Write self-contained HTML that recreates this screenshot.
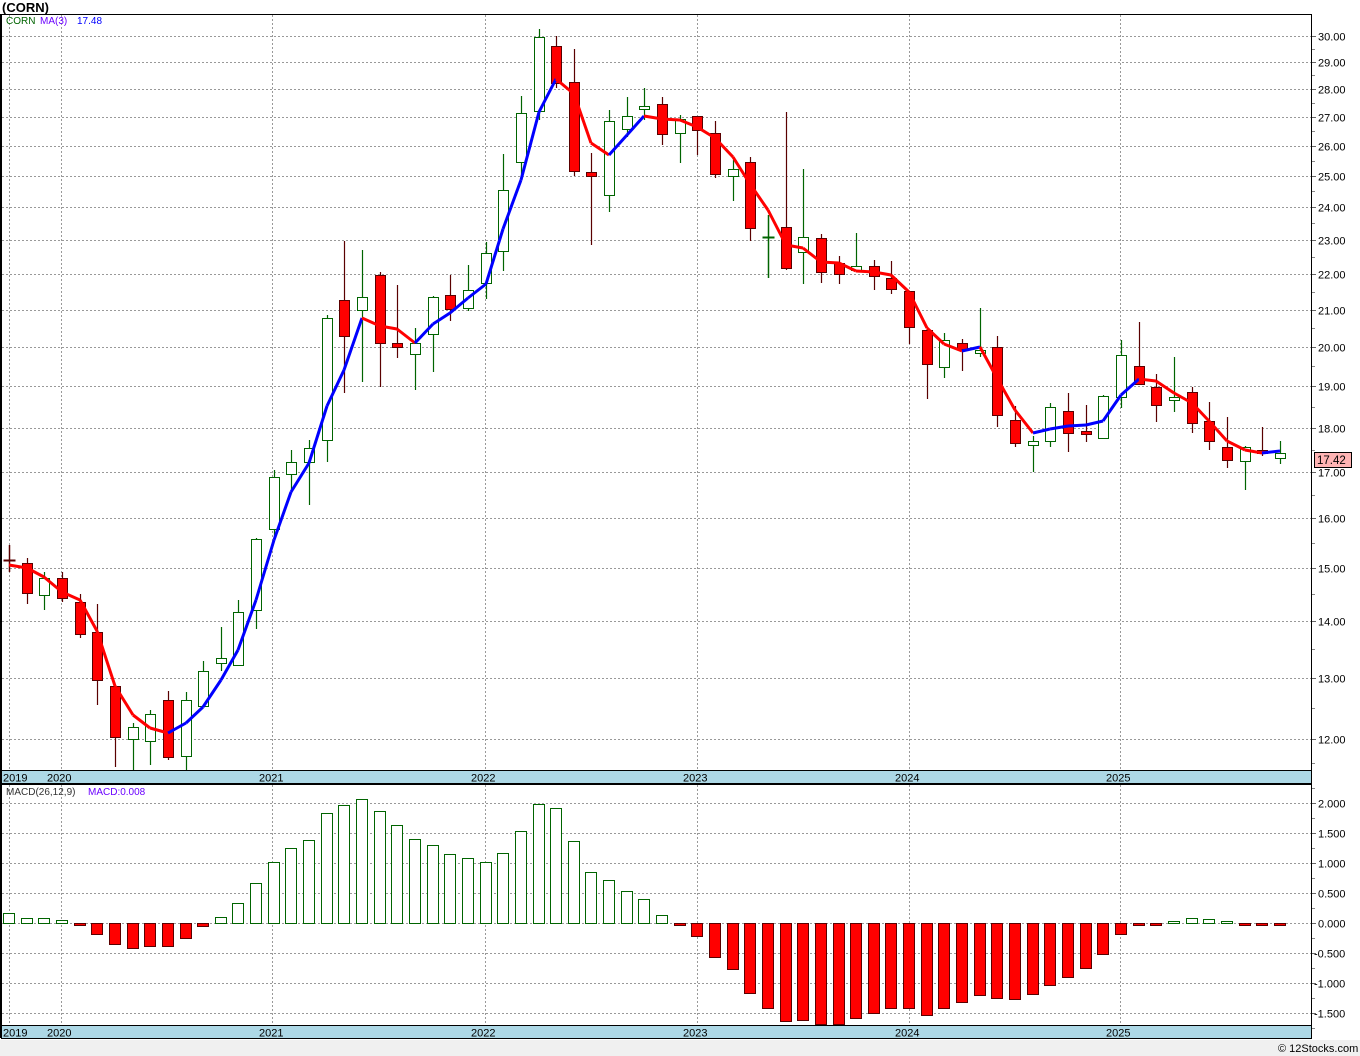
<!DOCTYPE html>
<html><head><meta charset="utf-8"><style>
body{margin:0;background:#fff;width:1360px;height:1056px;overflow:hidden;font-family:"Liberation Sans",sans-serif}
svg{position:absolute;left:0;top:0}
</style></head><body>
<svg id="s" width="1360" height="1056" xmlns="http://www.w3.org/2000/svg" font-family="Liberation Sans, sans-serif">
<rect x="0" y="1040" width="1360" height="16" fill="#f0f0f0"/>
<text x="2" y="12" font-size="13" font-weight="bold">(CORN)</text>
<rect x="1.5" y="770.5" width="1310" height="13" fill="#add8e6" stroke="#000"/>
<rect x="1.5" y="1025.5" width="1310" height="13" fill="#add8e6" stroke="#000"/>
<g id="g"></g>
<rect x="1.5" y="14.5" width="1310" height="756" fill="none" stroke="#000"/>
<line x1="1" y1="14" x2="1" y2="1038" stroke="#000" stroke-width="2"/>
<rect x="1.5" y="784.5" width="1310" height="241" fill="none" stroke="#000"/>
<text x="6" y="24" font-size="10" fill="#006400">CORN</text>
<text x="40" y="24" font-size="10" fill="#6a00ff">MA(3)</text>
<text x="77" y="24" font-size="10" fill="#0000ff">17.48</text>
<text x="6" y="795" font-size="10" fill="#333">MACD(26,12,9)</text>
<text x="88" y="795" font-size="10" fill="#6a00ff">MACD:0.008</text>
<rect x="1314.5" y="452.5" width="37" height="15" fill="#ffb4b4" stroke="#000"/>
<text x="1317" y="464" font-size="11.5">17.42</text>
<text x="1278" y="1052" font-size="11">© 12Stocks.com</text>
</svg>
<script>
var g=document.getElementById('g'),h='';
function L(x1,y1,x2,y2,c,w,d){h+='<line x1="'+x1+'" y1="'+y1+'" x2="'+x2+'" y2="'+y2+'" stroke="'+c+'" stroke-width="'+(w||1)+'"'+(d?' stroke-dasharray="2,2"':'')+'/>';}
function T(x,y,t,s){h+='<text x="'+x+'" y="'+y+'" font-size="'+(s||11)+'">'+t+'</text>';}
function py(p){return 36+(Math.log(30)-Math.log(p))*767.2;}
for(var p=12;p<=30;p++){var y=Math.round(py(p))+0.5;L(2,y,1311,y,'#999',1,1);L(1311,y,1316,y,'#666');T(1318,y+4,p.toFixed(2));
 var y2=Math.round(py(p+0.5))+0.5;if(p<30)L(1311,y2,1315,y2,'#888');}
L(1311,763.5,1315,763.5,'#888');
var ml=['2.000','1.500','1.000','0.500','0.000','-0.500','-1.000','-1.500'];
for(var i=0;i<8;i++){var y=803+i*30+0.5;L(2,y,1311,y,'#999',1,1);L(1311,y,1316,y,'#666');T(i>4?1314:1318,y+4,ml[i]);L(1311,y+15,1315,y+15,'#888');}
L(1311,788.5,1315,788.5,'#888');
var vx=[9,61,272,485,697,909,1120];
vx.forEach(function(x){x+=0.5;L(x,15,x,770,'#999',1,1);L(x,785,x,1025,'#999',1,1);});
var yl=[['2019',3],['2020',47],['2021',259],['2022',471],['2023',683],['2024',895],['2025',1106]];
yl.forEach(function(a){T(a[1],781.5,a[0]);T(a[1],1036.5,a[0]);});
L(1311.5,14,1311.5,1039,'#000');
var C=[[560,560,545,572,2],[563,593,558,604,0],[578,595,572,610,1],[578,598,572,602,0],[602,634,594,638,0],[632,680,604,705,0],[686,737,686,767,0],[727,739,723,770,1],[714,741,710,765,1],[700,757,691,760,0],[700,756,692,770,1],[671,706,661,706,1],[658,663,627,671,1],[612,665,600,666,1],[539,610,538,629,1],[477,529,470,540,1],[462,474,450,490,1],[448,462,440,505,1],[318,440,315,462,1],[300,336,241,393,0],[297,310,250,382,1],[275,343,272,387,0],[343,347,285,358,0],[343,354,328,390,1],[297,334,296,372,1],[295,309,275,321,0],[290,308,265,311,1],[253,283,242,299,1],[190,251,154,271,1],[113,162,96,178,1],[37,111,29,120,1],[46,83,36,88,0],[82,171,49,176,0],[172,176,153,245,0],[121,195,110,212,1],[116,129,97,137,1],[106,109,88,120,1],[104,134,97,145,0],[119,133,115,163,1],[116,130,116,155,0],[133,174,121,178,0],[169,176,160,201,1],[162,228,157,241,0],[237,237,215,278,3],[227,268,112,270,0],[237,252,169,284,1],[238,272,234,283,0],[263,274,256,284,0],[266,270,233,270,1],[266,276,260,290,0],[278,289,261,294,0],[291,327,291,344,0],[330,364,330,399,0],[340,367,333,378,1],[343,349,339,371,0],[350,352,308,357,1],[347,415,336,427,0],[420,443,406,447,0],[441,445,436,472,1],[407,441,403,447,1],[411,433,393,452,0],[431,434,405,442,0],[396,438,395,439,1],[355,397,340,408,1],[366,384,322,384,0],[387,405,374,422,0],[397,400,357,412,1],[392,423,387,433,0],[421,441,402,450,0],[447,460,417,468,0],[447,461,446,490,1],[450,452,427,456,0],[453,458,441,464,1]];
function X(i){return Math.round(9+i*17.65);}
C.forEach(function(c,i){var x=X(i)+0.5,gr=c[4]==1||c[4]==3;var col=gr?'#006400':'#5a0000';
 if(c[4]>=2){L(x,c[2],x,c[3],col,1.5);L(x-6,c[0]+0.5,x+6,c[0]+0.5,col,2);return;}
 L(x,c[2],x,c[0],col,1.2);L(x,c[1],x,c[3],col,1.2);
 var hh=Math.max(c[1]-c[0],3);
 h+='<rect x="'+(x-5)+'" y="'+(c[0]+0.5)+'" width="10" height="'+hh+'" fill="'+(gr?'#fff':'#f00')+'" stroke="'+col+'" stroke-width="1"/>';});
var M=[565,568,577,592,600,631,686,715,728,733,723,707,680,650,600,540,492,463,406,370,318,326,329,343,324,313,298,284,229,180,112,79,94,143,155,135,116,119,120,127,138,157,184,210,245,248,262,263,271,272,275,292,328,344,351,347,378,410,433,429,426,425,421,395,379,381,393,403,421,441,450,453,451];
for(var i=1;i<M.length;i++){L(X(i-1),M[i-1],X(i),M[i],M[i]<M[i-1]?'#0000ff':'#ff0000',3);}
var D=[913,918,918,920,924,934,944,948,946,946,938,926,917,903,883,862,848,840,813,805,799,811,825,839,845,854,858,862,853,831,804,808,841,872,880,891,899,915,924,936,957,969,993,1008,1021,1020,1024,1024,1018,1013,1008,1008,1015,1008,1002,995,998,999,994,985,977,968,954,934,925,923,921,918,919,921,925,925,924];
D.forEach(function(v,i){var x=X(i);if(v<923){h+='<rect x="'+(x-5.5)+'" y="'+(v+0.5)+'" width="11" height="'+(923-v)+'" fill="#fff" stroke="#006400"/>';}
 else{var hh=Math.max(v-923,2);h+='<rect x="'+(x-5.5)+'" y="923.5" width="11" height="'+hh+'" fill="#f00" stroke="#5a0000"/>';}});
g.innerHTML=h;
</script>
</body></html>
